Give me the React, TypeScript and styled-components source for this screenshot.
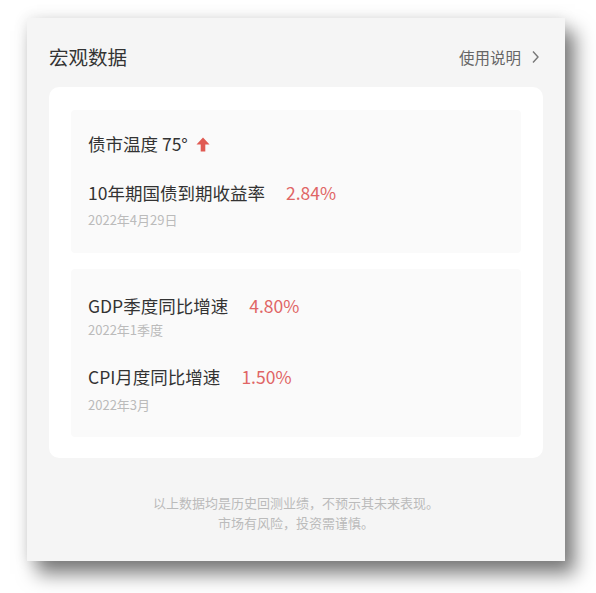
import React from "react";
import styled, { createGlobalStyle } from "styled-components";

const Global = createGlobalStyle`
  html, body { margin: 0; padding: 0; background: #ffffff; }
  body { font-family: "Noto Sans CJK SC", "Noto Sans", sans-serif; }
  * { box-sizing: border-box; }
`;

const Page = styled.div`
  width: 596px;
  height: 593px;
  padding: 18px 0 0 27px;
`;

const Panel = styled.div`
  width: 538px;
  height: 543px;
  background: #f5f5f5;
  box-shadow: 0 0 14px rgba(0, 0, 0, 0.1), 10px 13px 18px rgba(0, 0, 0, 0.5);
  padding: 0 22px;
  display: flex;
  flex-direction: column;
`;

const Header = styled.div`
  height: 69px;
  display: flex;
  align-items: center;
  justify-content: space-between;
  padding-top: 8px;
`;

const Title = styled.div`
  font-size: 19.5px;
  color: #333333;
  line-height: 28px;
`;

const Help = styled.div`
  display: flex;
  align-items: center;
  gap: 10px;
  font-size: 15.5px;
  color: #666666;
  margin-right: 3px;
`;

const Card = styled.div`
  background: #ffffff;
  border-radius: 10px;
  padding: 23px 22px 21px;
  display: flex;
  flex-direction: column;
  gap: 16px;
`;

const Sub = styled.div<{ $pt: number; $pb: number }>`
  background: #fafafa;
  border-radius: 4px;
  padding: ${(p) => p.$pt}px 17px ${(p) => p.$pb}px;
  display: flex;
  flex-direction: column;
`;

const Heading = styled.div`
  display: flex;
  align-items: center;
  gap: 8px;
  font-size: 17.5px;
  line-height: 24px;
  color: #333333;
`;

const Row = styled.div<{ $mt: number }>`
  display: flex;
  align-items: center;
  gap: 21px;
  margin-top: ${(p) => p.$mt}px;
  font-size: 17.5px;
  line-height: 24px;
  color: #333333;
`;

const Value = styled.span`
  color: #e06565;
`;

const DateText = styled.div<{ $mt: number }>`
  margin-top: ${(p) => p.$mt}px;
  font-size: 13px;
  line-height: 18px;
  color: #bbbbbb;
`;

const Footer = styled.div`
  margin-top: 35px;
  text-align: center;
  font-size: 13px;
  line-height: 20px;
  color: #bbbbbb;
`;

const UpArrow = () => (
  <svg width="14" height="15" viewBox="0 0 14 15">
    <path d="M7 0.5 L13.5 7.5 L9.3 7.5 L9.3 14.5 L4.7 14.5 L4.7 7.5 L0.5 7.5 Z" fill="#e05a52" />
  </svg>
);

const Chevron = () => (
  <svg width="9" height="14" viewBox="0 0 9 14">
    <path d="M2 1.5 L7 7 L2 12.5" fill="none" stroke="#777" strokeWidth="1.4" />
  </svg>
);

export default function App() {
  return (
    <>
      <Global />
      <Page>
        <Panel>
          <Header>
            <Title>宏观数据</Title>
            <Help>
              <span>使用说明</span>
              <Chevron />
            </Help>
          </Header>
          <Card>
            <Sub $pt={22} $pb={24}>
              <Heading>
                <span>债市温度 75°</span>
                <UpArrow />
              </Heading>
              <Row $mt={25}>
                <span>10年期国债到期收益率</span>
                <Value>2.84%</Value>
              </Row>
              <DateText $mt={6}>2022年4月29日</DateText>
            </Sub>
            <Sub $pt={25} $pb={23}>
              <Row $mt={0}>
                <span>GDP季度同比增速</span>
                <Value>4.80%</Value>
              </Row>
              <DateText $mt={3}>2022年1季度</DateText>
              <Row $mt={26}>
                <span>CPI月度同比增速</span>
                <Value>1.50%</Value>
              </Row>
              <DateText $mt={7}>2022年3月</DateText>
            </Sub>
          </Card>
          <Footer>
            以上数据均是历史回测业绩，不预示其未来表现。
            <br />
            市场有风险，投资需谨慎。
          </Footer>
        </Panel>
      </Page>
    </>
  );
}
